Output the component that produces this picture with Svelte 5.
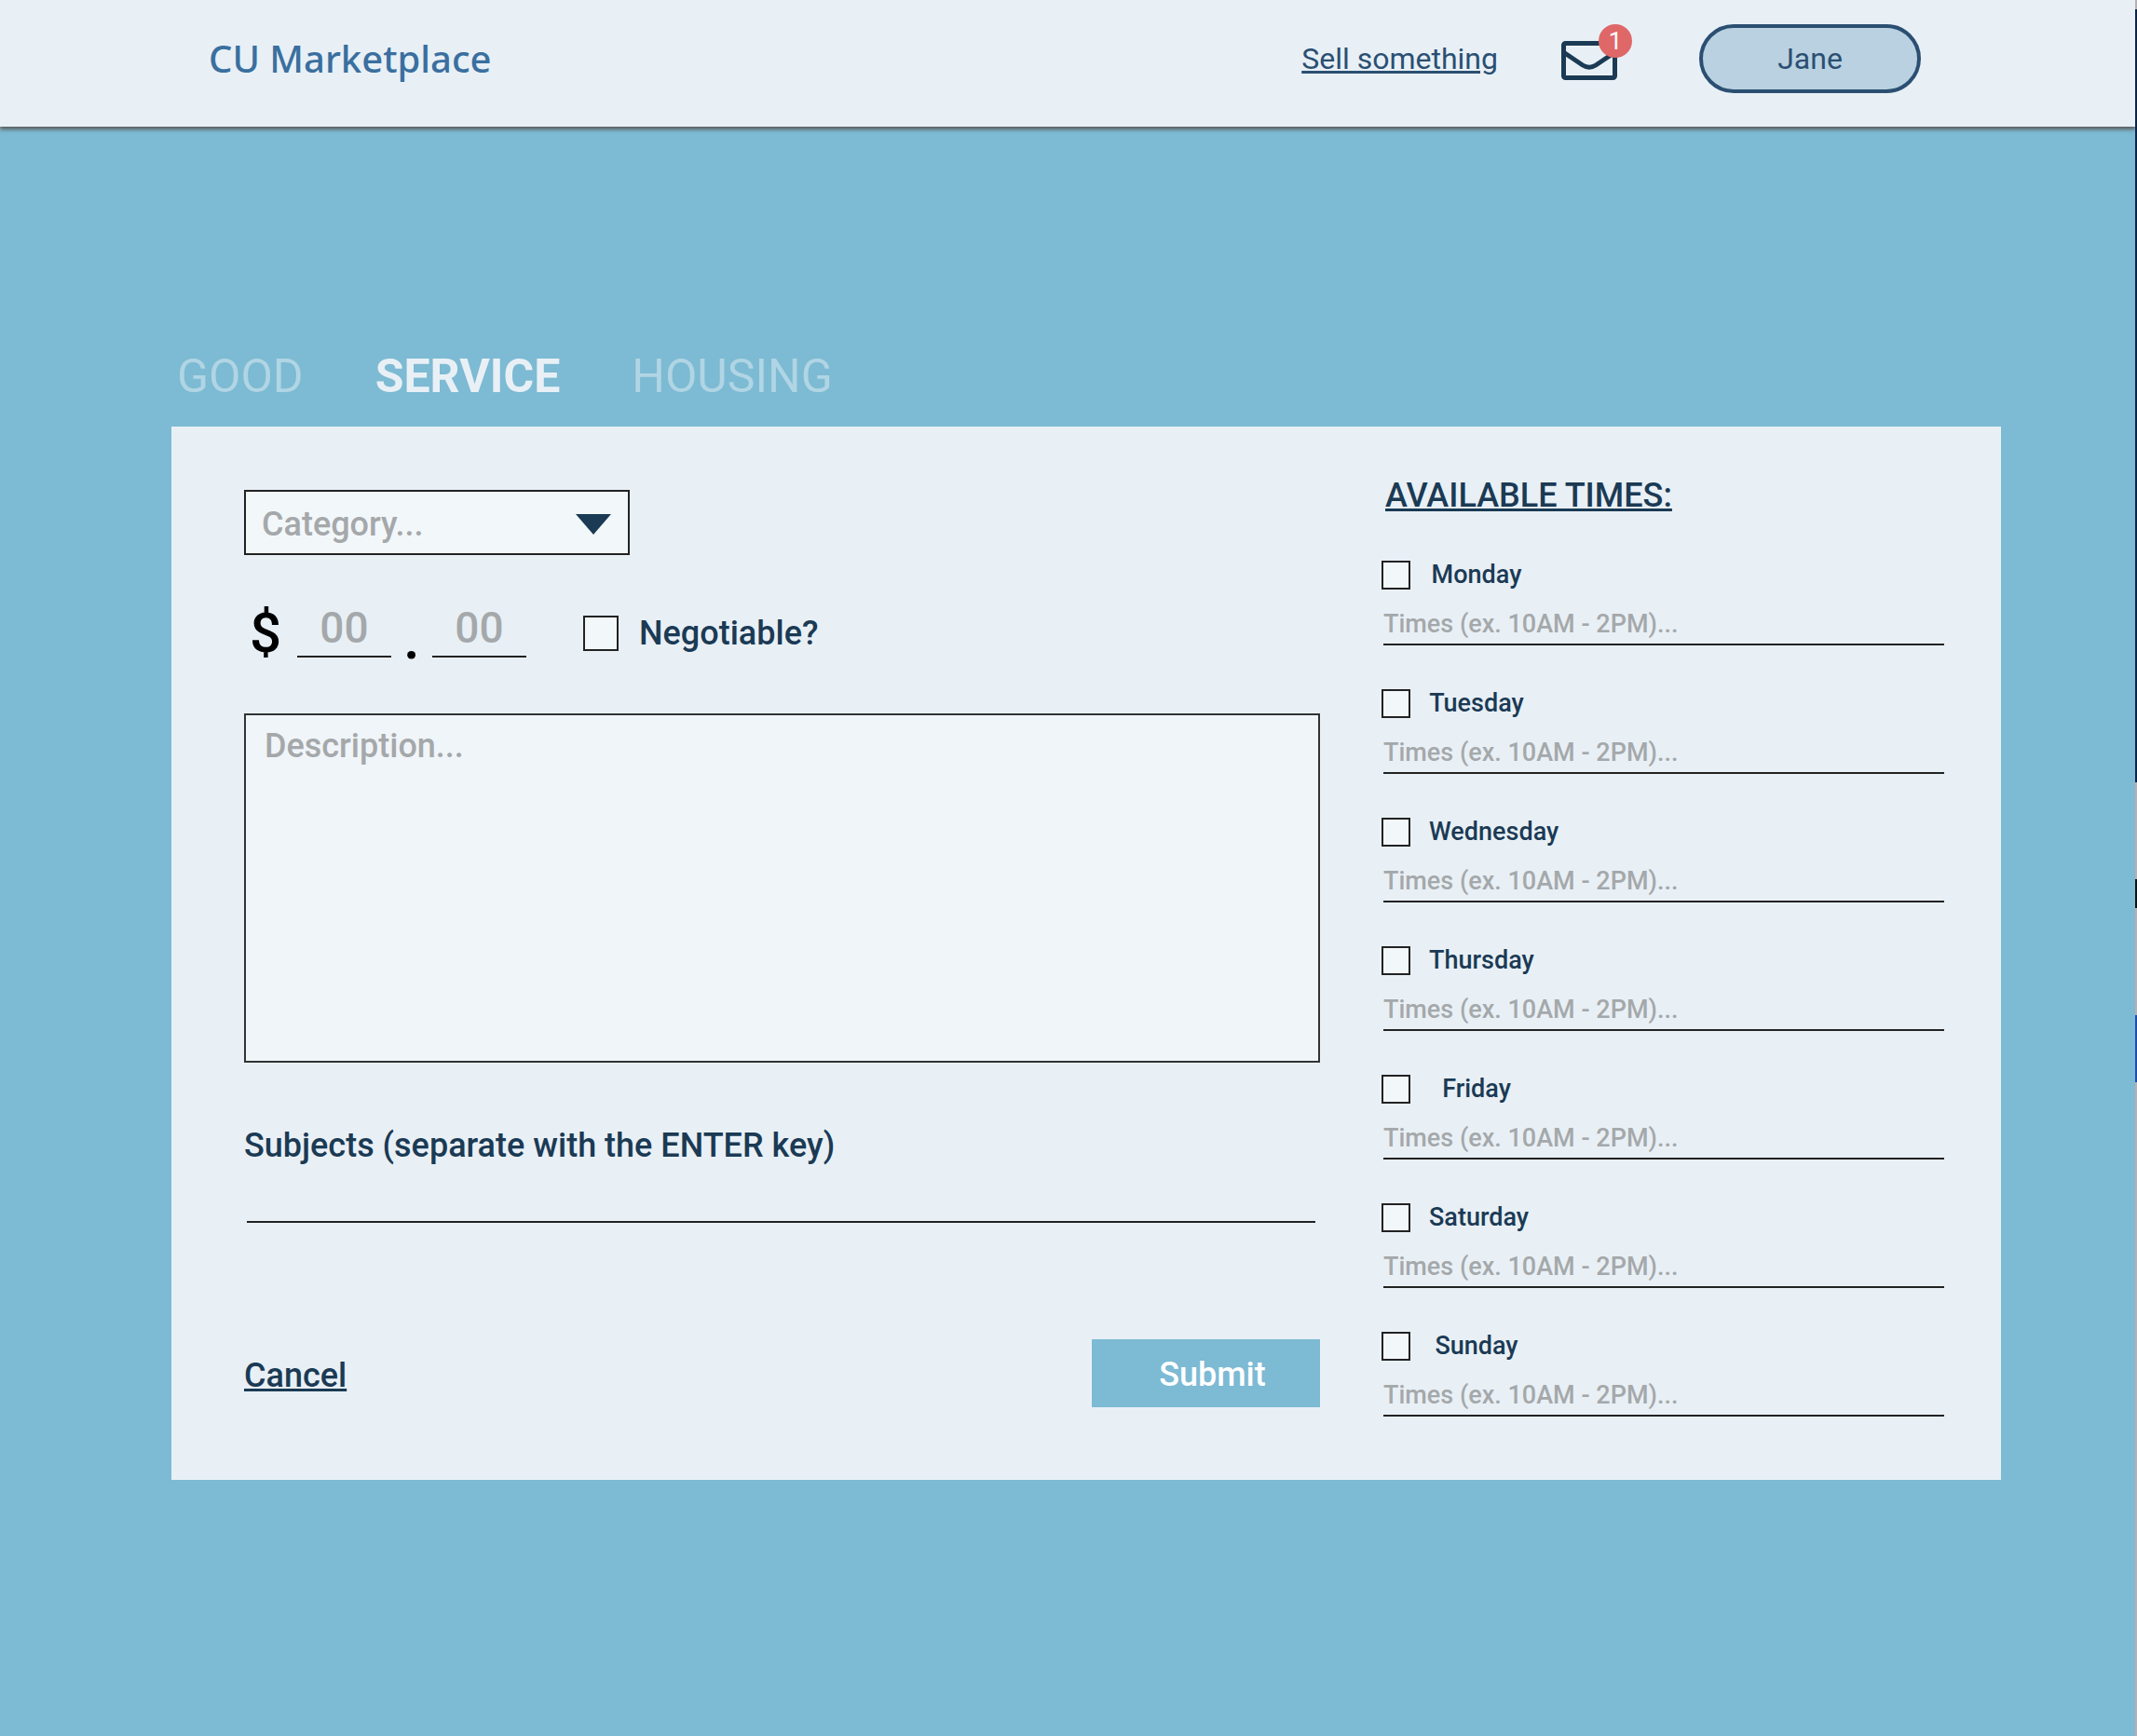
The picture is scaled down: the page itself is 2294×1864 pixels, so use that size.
<script>
  const tabs = ['GOOD', 'SERVICE', 'HOUSING'];
  const days = ['Monday', 'Tuesday', 'Wednesday', 'Thursday', 'Friday', 'Saturday', 'Sunday'];
  let active = $state('SERVICE');
</script>

<div class="window">
  <div class="page">
    <header>
      <h1>CU Marketplace</h1>
      <nav>
        <a class="sell" href="#sell">Sell something</a>
        <a class="mail" href="#inbox" aria-label="Inbox, 1 unread message">
          <svg viewBox="0 0 60 42" width="60" height="42" aria-hidden="true">
            <rect x="2.5" y="2.5" width="55" height="37" rx="2" />
            <path d="M3 12.5 L23 26 Q30 30.5 37 26 L57 12.5" />
          </svg>
          <span class="badge">1</span>
        </a>
        <button class="user" type="button">Jane</button>
      </nav>
    </header>

    <main>
      <div class="tabs" role="tablist">
        {#each tabs as tab}
          <button
            type="button"
            role="tab"
            aria-selected={active === tab}
            class:active={active === tab}
            onclick={() => (active = tab)}>{tab}</button>
        {/each}
      </div>

      <form class="card" onsubmit={(e) => e.preventDefault()}>
        <div class="details">
          <div class="category">
            <select aria-label="Category">
              <option>Category...</option>
              <option>Tutoring</option>
              <option>Moving</option>
            </select>
            <svg viewBox="0 0 38 22" width="38" height="22" aria-hidden="true"><path d="M0 0H38L19 22Z" /></svg>
          </div>

          <div class="price">
            <span class="sign">$</span>
            <input type="text" placeholder="00" aria-label="Dollars" />
            <span class="sign dot">.</span>
            <input type="text" placeholder="00" aria-label="Cents" />
            <label class="negotiable"><input type="checkbox" />Negotiable?</label>
          </div>

          <textarea placeholder="Description..." aria-label="Description"></textarea>

          <label class="subjects" for="subjects">Subjects (separate with the ENTER key)</label>
          <input class="line" id="subjects" type="text" />

          <div class="actions">
            <a href="#cancel">Cancel</a>
            <button type="submit">Submit</button>
          </div>
        </div>

        <section class="times">
          <h2>AVAILABLE TIMES:</h2>
          <div class="days">
            {#each days as day}
              <div class="day">
                <label><input type="checkbox" /><span>{day}</span></label>
                <input type="text" placeholder="Times (ex. 10AM - 2PM)..." aria-label="{day} times" />
              </div>
            {/each}
          </div>
        </section>
      </form>
    </main>
  </div>
</div>

<style>
  :global(body) {
    margin: 0;
    background: #7dbad3;
  }
  .window,
  .window * {
    box-sizing: border-box;
  }
  /* The thin edge to the right of the page shows what lies behind it. */
  .window {
    padding-right: 2px;
    background: linear-gradient(
      #b5b0b2 10px,
      #0c2347 10px 840px,
      #b5b0b2 840px 944px,
      #111 944px 975px,
      #b5b0b2 975px 1090px,
      #1f4bb0 1090px 1162px,
      #b5b0b2 1162px
    );
  }
  .page {
    min-height: 100vh;
    overflow: hidden;
    background: #7dbad3;
    font-family: Roboto, 'Liberation Sans', sans-serif;
    font-size: 36px;
    font-weight: 500;
    line-height: 44px;
    color: #1b3a54;
  }
  input,
  select,
  textarea,
  button {
    font: inherit;
    color: inherit;
    margin: 0;
    padding: 0;
    border: 0;
    border-radius: 0;
    background: none;
    outline: 0;
  }
  a {
    color: inherit;
  }

  header {
    display: flex;
    align-items: center;
    justify-content: space-between;
    height: 136px;
    padding: 0 230px 10px 224px;
    background: #e8f0f6;
    box-shadow: 0 3px 4px #5c5c5c;
  }
  h1 {
    margin: 0;
    font: 500 40px/56px 'Noto Sans', sans-serif;
    color: #3a6f9f;
  }
  nav {
    display: flex;
    align-items: center;
    font-size: 32px;
    font-weight: 400;
    color: #2b4f72;
  }
  .mail {
    position: relative;
    display: flex;
    margin: 4px 88px 0 68px;
  }
  .mail svg {
    fill: none;
    stroke: #1b3a54;
    stroke-width: 5;
  }
  .badge {
    position: absolute;
    top: -18px;
    right: -16px;
    width: 36px;
    height: 36px;
    border-radius: 50%;
    background: #df6768;
    color: #fff;
    font-size: 26px;
    line-height: 36px;
    text-align: center;
  }
  .user {
    width: 238px;
    height: 74px;
    border: 4px solid #2b4f72;
    border-radius: 37px;
    background: #b9d1e1;
  }

  main {
    padding: 238px 144px 60px 184px;
  }
  .tabs {
    display: flex;
    gap: 77px;
    padding: 0 6px 24px;
  }
  .tabs button {
    font-size: 50px;
    font-weight: 400;
    line-height: 60px;
    color: #b0d5e4;
  }
  .tabs .active {
    font-weight: 700;
    color: #e8f0f6;
  }

  .card {
    display: grid;
    grid-template-columns: 1fr 604px;
    gap: 66px;
    padding: 52px 61px 68px 78px;
    background: #e8f0f6;
  }
  .details {
    display: flex;
    flex-direction: column;
    padding-top: 16px;
  }
  .category {
    display: grid;
    align-items: center;
    width: 414px;
    height: 70px;
  }
  .category > * {
    grid-area: 1 / 1;
  }
  .category select {
    appearance: none;
    width: 100%;
    height: 100%;
    padding: 4px 17px 0;
    border: 2px solid #222;
    background: #f2f7fa;
    color: #a5a8aa;
  }
  .category svg {
    justify-self: end;
    margin: 4px 20px 0 0;
    fill: #1b3a54;
    pointer-events: none;
  }

  .price {
    display: flex;
    align-items: flex-end;
    margin-top: 52px;
    height: 58px;
  }
  .sign {
    width: 57px;
    padding-left: 6px;
    font-size: 60px;
    line-height: 52px;
    color: #000;
  }
  .dot {
    width: 44px;
    padding: 0;
    font-size: 64px;
    line-height: 40px;
    text-align: center;
  }
  .price > input {
    width: 101px;
    height: 60px;
    padding-bottom: 2px;
    border-bottom: 2px solid #222;
    font-size: 46px;
    text-align: center;
  }
  .price > input::placeholder {
    font-weight: 500;
  }
  .negotiable {
    display: flex;
    align-items: center;
    gap: 22px;
    margin-left: 61px;
    height: 52px;
  }
  input[type='checkbox'] {
    appearance: none;
    flex: none;
    width: 38px;
    height: 38px;
    border: 2px solid #222;
    background: #f2f7fa;
  }
  ::placeholder {
    color: #a5a8aa;
    opacity: 1;
  }
  textarea {
    display: block;
    height: 375px;
    margin-top: 60px;
    padding: 11px 20px;
    border: 2px solid #333;
    background: #f0f5f9;
    resize: none;
  }
  .subjects {
    margin-top: 67px;
  }
  .line {
    height: 61px;
    margin: 0 5px 0 3px;
    border-bottom: 2px solid #222;
  }
  .actions {
    display: flex;
    align-items: center;
    justify-content: space-between;
    margin-top: 125px;
  }
  .actions button {
    width: 245px;
    height: 73px;
    padding: 2px 0 0 14px;
    background: #7dbad3;
    color: #fff;
  }
  .actions a {
    padding-top: 4px;
  }

  .times h2 {
    margin: 0;
    padding-left: 4px;
    font: inherit;
    text-decoration: underline;
  }
  .days {
    display: grid;
    gap: 46px;
    margin-top: 47px;
    font-size: 27px;
    line-height: 32px;
  }
  .day label {
    display: flex;
    align-items: center;
    gap: 20px;
  }
  .day label span {
    min-width: 102px;
    text-align: center;
  }
  .day input[type='checkbox'] {
    width: 31px;
    height: 31px;
  }
  .day input[type='text'] {
    width: 602px;
    height: 60px;
    margin-left: 2px;
    padding-top: 16px;
    border-bottom: 2px solid #222;
  }
</style>
